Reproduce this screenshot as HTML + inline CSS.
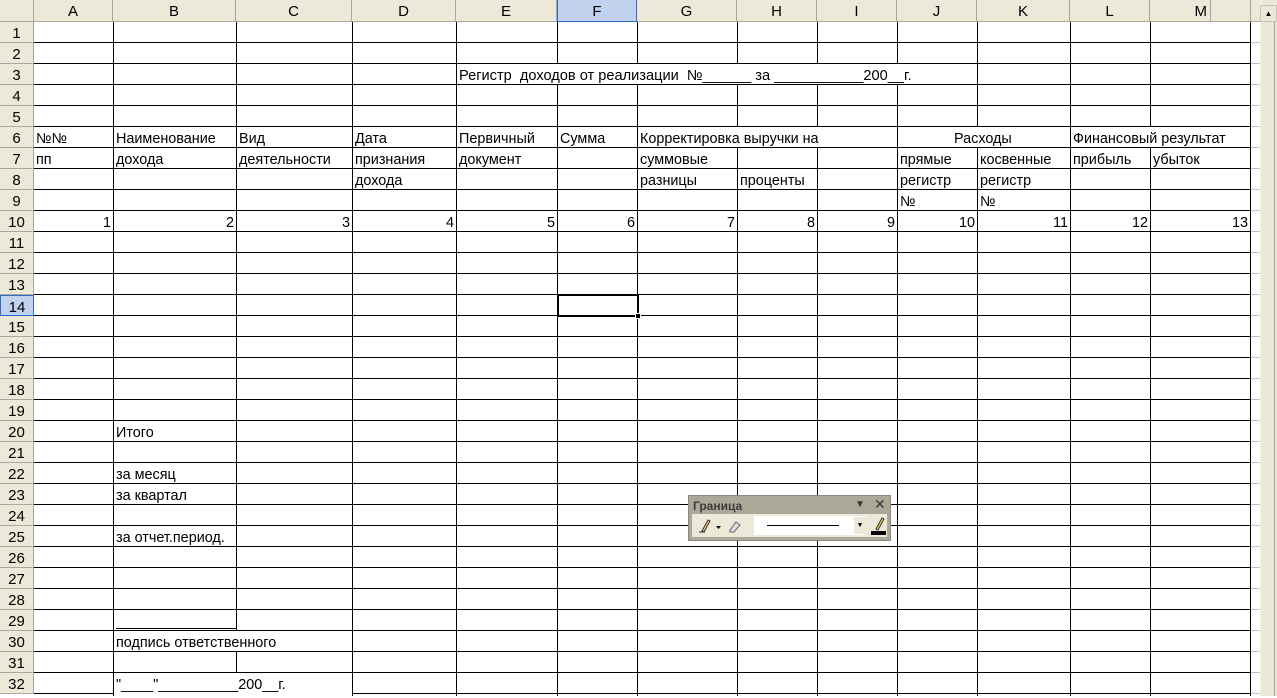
<!DOCTYPE html>
<html><head><meta charset="utf-8"><style>
*{margin:0;padding:0;box-sizing:border-box}
body{width:1277px;height:696px;overflow:hidden;background:#fff;font-family:"Liberation Sans",Arial,sans-serif;font-size:14.4px;color:#000;position:relative}
.a{position:absolute}
.ch{position:absolute;top:0;height:22px;background:#ece9d8;border-right:1px solid #aca899;border-bottom:1px solid #aca899;text-align:center;line-height:23px;font-size:15px}
.rh{position:absolute;left:0;width:34px;height:21px;background:#ece9d8;border-bottom:1px solid #aca899;border-right:1px solid #aca899;text-align:center;line-height:23px;font-size:15px}
.v{position:absolute;top:22px;width:1px;height:674px;background:#000}
.m{position:absolute;height:20px;background:#fff}
.t{position:absolute;height:20px;line-height:25px;white-space:nowrap}
.r{text-align:right}
</style></head><body>
<div class="a" style="left:34px;top:22px;width:1217px;height:674px;background:repeating-linear-gradient(to bottom,transparent 0,transparent 20px,#000 20px,#000 21px)"></div>
<div class="a" style="left:1251px;top:22px;width:9px;height:674px;background:repeating-linear-gradient(to bottom,transparent 0,transparent 20px,#c0c0c0 20px,#c0c0c0 21px)"></div>
<div class="v" style="left:113px"></div><div class="v" style="left:236px"></div><div class="v" style="left:352px"></div><div class="v" style="left:456px"></div><div class="v" style="left:557px"></div><div class="v" style="left:637px"></div><div class="v" style="left:737px"></div><div class="v" style="left:817px"></div><div class="v" style="left:897px"></div><div class="v" style="left:977px"></div><div class="v" style="left:1070px"></div><div class="v" style="left:1150px"></div><div class="v" style="left:1250px"></div>
<div class="m" style="left:458px;top:64px;width:519px"></div>
<div class="m" style="left:638px;top:127px;width:259px"></div>
<div class="m" style="left:898px;top:127px;width:172px"></div>
<div class="m" style="left:1071px;top:127px;width:179px"></div>
<div class="m" style="left:114px;top:631px;width:238px"></div>
<div class="m" style="left:114px;top:673px;width:238px;height:23px"></div>
<div class="ch" style="left:0;width:34px"></div>
<div class="ch" style="left:34px;width:79px">A</div>
<div class="ch" style="left:113px;width:123px">B</div>
<div class="ch" style="left:236px;width:116px">C</div>
<div class="ch" style="left:352px;width:104px">D</div>
<div class="ch" style="left:456px;width:101px">E</div>
<div class="ch" style="left:557px;width:80px;background:#c1d2ee;border-right:1px solid #316ac5;border-bottom:1px solid #316ac5;border-left:1px solid #316ac5">F</div>
<div class="ch" style="left:637px;width:100px">G</div>
<div class="ch" style="left:737px;width:80px">H</div>
<div class="ch" style="left:817px;width:80px">I</div>
<div class="ch" style="left:897px;width:80px">J</div>
<div class="ch" style="left:977px;width:93px">K</div>
<div class="ch" style="left:1070px;width:80px">L</div>
<div class="ch" style="left:1150px;width:61px;text-align:right;padding-right:3px">M</div>
<div class="ch" style="left:1211px;width:40px"></div>
<div class="ch" style="left:1251px;width:10px;border-right:none"></div>
<div class="a" style="left:1260px;top:0;width:17px;height:696px;background:#ebe8d7;border-left:1px solid #f5f4ec"></div>
<div class="a" style="left:1274px;top:22px;width:1px;height:674px;background:#a8a598"></div>
<div class="a" style="left:1260px;top:5px;width:17px;height:17px;background:#ebe8d7;border:1px solid #c8c5b5;font-size:8px;text-align:center;line-height:15px">▲</div>
<div class="rh" style="top:22px">1</div><div class="rh" style="top:43px">2</div><div class="rh" style="top:64px">3</div><div class="rh" style="top:85px">4</div><div class="rh" style="top:106px">5</div><div class="rh" style="top:127px">6</div><div class="rh" style="top:148px">7</div><div class="rh" style="top:169px">8</div><div class="rh" style="top:190px">9</div><div class="rh" style="top:211px">10</div><div class="rh" style="top:232px">11</div><div class="rh" style="top:253px">12</div><div class="rh" style="top:274px">13</div><div class="rh" style="top:295px;background:#c1d2ee;border:1px solid #316ac5">14</div><div class="rh" style="top:316px">15</div><div class="rh" style="top:337px">16</div><div class="rh" style="top:358px">17</div><div class="rh" style="top:379px">18</div><div class="rh" style="top:400px">19</div><div class="rh" style="top:421px">20</div><div class="rh" style="top:442px">21</div><div class="rh" style="top:463px">22</div><div class="rh" style="top:484px">23</div><div class="rh" style="top:505px">24</div><div class="rh" style="top:526px">25</div><div class="rh" style="top:547px">26</div><div class="rh" style="top:568px">27</div><div class="rh" style="top:589px">28</div><div class="rh" style="top:610px">29</div><div class="rh" style="top:631px">30</div><div class="rh" style="top:652px">31</div><div class="rh" style="top:673px">32</div>
<div class="t" style="left:459px;top:64px;font-size:14.6px">Регистр&nbsp; доходов от реализации&nbsp; №______ за ___________200__г.</div>
<div class="t" style="left:36px;top:127px">№№</div>
<div class="t" style="left:116px;top:127px">Наименование</div>
<div class="t" style="left:239px;top:127px">Вид</div>
<div class="t" style="left:355px;top:127px">Дата</div>
<div class="t" style="left:459px;top:127px">Первичный</div>
<div class="t" style="left:560px;top:127px">Сумма</div>
<div class="t" style="left:640px;top:127px">Корректировка выручки на</div>
<div class="t" style="left:954px;top:127px">Расходы</div>
<div class="t" style="left:1073px;top:127px">Финансовый результат</div>
<div class="t" style="left:36px;top:148px">пп</div>
<div class="t" style="left:116px;top:148px">дохода</div>
<div class="t" style="left:239px;top:148px">деятельности</div>
<div class="t" style="left:355px;top:148px">признания</div>
<div class="t" style="left:459px;top:148px">документ</div>
<div class="t" style="left:640px;top:148px">суммовые</div>
<div class="t" style="left:900px;top:148px">прямые</div>
<div class="t" style="left:980px;top:148px">косвенные</div>
<div class="t" style="left:1073px;top:148px">прибыль</div>
<div class="t" style="left:1153px;top:148px">убыток</div>
<div class="t" style="left:355px;top:169px">дохода</div>
<div class="t" style="left:640px;top:169px">разницы</div>
<div class="t" style="left:740px;top:169px">проценты</div>
<div class="t" style="left:900px;top:169px">регистр</div>
<div class="t" style="left:980px;top:169px">регистр</div>
<div class="t" style="left:900px;top:190px">№</div>
<div class="t" style="left:980px;top:190px">№</div>
<div class="t r" style="left:34px;top:211px;width:77px">1</div>
<div class="t r" style="left:113px;top:211px;width:121px">2</div>
<div class="t r" style="left:236px;top:211px;width:114px">3</div>
<div class="t r" style="left:352px;top:211px;width:102px">4</div>
<div class="t r" style="left:456px;top:211px;width:99px">5</div>
<div class="t r" style="left:557px;top:211px;width:78px">6</div>
<div class="t r" style="left:637px;top:211px;width:98px">7</div>
<div class="t r" style="left:737px;top:211px;width:78px">8</div>
<div class="t r" style="left:817px;top:211px;width:78px">9</div>
<div class="t r" style="left:897px;top:211px;width:78px">10</div>
<div class="t r" style="left:977px;top:211px;width:91px">11</div>
<div class="t r" style="left:1070px;top:211px;width:78px">12</div>
<div class="t r" style="left:1150px;top:211px;width:98px">13</div>
<div class="t" style="left:116px;top:421px">Итого</div>
<div class="t" style="left:116px;top:463px">за месяц</div>
<div class="t" style="left:116px;top:484px">за квартал</div>
<div class="t" style="left:116px;top:526px">за отчет.период.</div>
<div class="a" style="left:116px;top:628px;width:121px;height:1px;background:#000"></div>
<div class="t" style="left:116px;top:631px">подпись ответственного</div>
<div class="t" style="left:116px;top:673px">"____"__________200__г.</div>
<div class="a" style="left:557px;top:294px;width:82px;height:23px;border:2px solid #000;box-shadow:inset 0 0 0 1px #fff"></div>
<div class="a" style="left:635px;top:313px;width:6px;height:6px;background:#000;border:1px solid #fff"></div>
<div class="a" style="left:688px;top:495px;width:203px;height:46px;background:#aca899;border:1px solid #8c8a7c">
 <div class="a" style="left:4px;top:3px;font-size:12px;font-weight:bold;color:#3a3a3a">Граница</div>
 <div class="a" style="left:166px;top:3px;font-size:10px;color:#333">▼</div>
 <div class="a" style="left:185px;top:0px;font-size:14px;color:#333">✕</div>
 <div class="a" style="left:3px;top:18px;width:195px;height:23px;background:#ece9d8">
  <svg class="a" style="left:4px;top:2px" width="50" height="20"><path d="M3 16h6M6 15l6-11 2 1-6 11z" stroke="#333" fill="#f0d060" stroke-width="1"/><path d="M20 10l5 0-2.5 3z" fill="#000"/><path d="M34 14l6-8 4 3-6 7h-4z" fill="#ddd" stroke="#666"/></svg>
  <div class="a" style="left:62px;top:2px;width:112px;height:19px;background:#fff"></div>
  <div class="a" style="left:75px;top:11px;width:72px;height:1px;background:#000"></div>
  <div class="a" style="left:162px;top:3px;width:12px;height:17px;background:#ece9d8;font-size:7px;text-align:center;line-height:17px">▼</div>
  <svg class="a" style="left:178px;top:1px" width="18" height="21"><path d="M6 14l6-11 2 1-6 11z" stroke="#333" fill="#f0d060"/><rect x="1" y="16" width="15" height="4" fill="#000"/></svg>
 </div>
</div>
</body></html>
